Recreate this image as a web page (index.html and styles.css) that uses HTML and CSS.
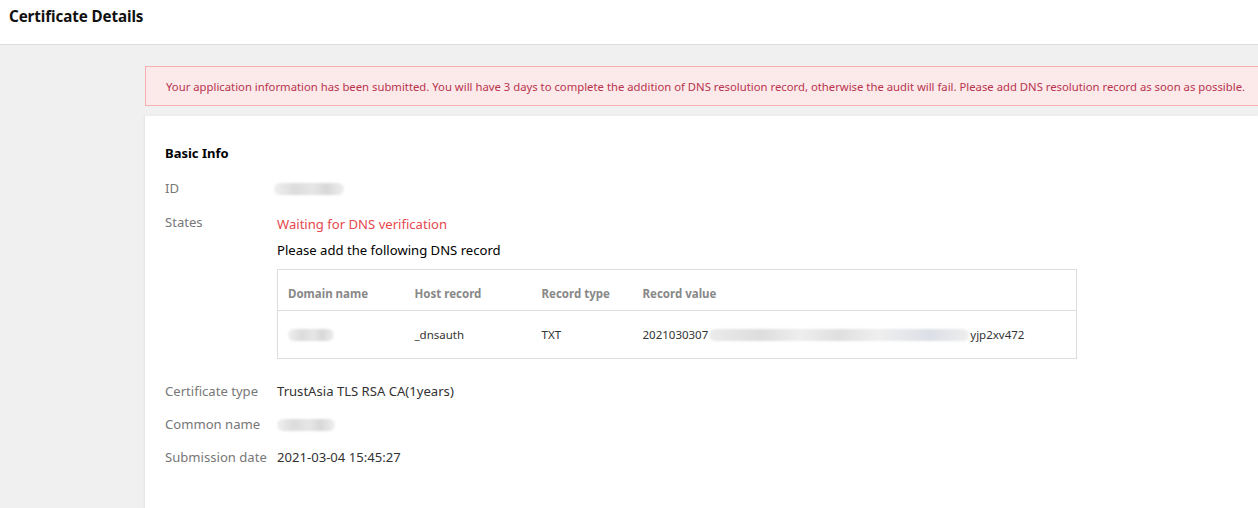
FILE: index.html
```html
<!DOCTYPE html>
<html>
<head>
<meta charset="utf-8">
<link rel="stylesheet" href="styles.css">
</head>
<body>
<header class="topbar"><h1 class="title">Certificate Details</h1></header>
<main class="content">
  <div class="alert">Your application information has been submitted. You will have 3 days to complete the addition of DNS resolution record, otherwise the audit will fail. Please add DNS resolution record as soon as possible.</div>
  <section class="card">
    <h2 class="section-title">Basic Info</h2>
    <div class="row row-id">
      <div class="label">ID</div>
      <div class="value"><span class="blur blur-id"></span></div>
    </div>
    <div class="row row-state">
      <div class="label">States</div>
      <div class="value">
        <div class="status">Waiting for DNS verification</div>
        <div class="hint">Please add the following DNS record</div>
        <table class="dns">
          <thead>
            <tr><th class="c1">Domain name</th><th class="c2">Host record</th><th class="c3">Record type</th><th>Record value</th></tr>
          </thead>
          <tbody>
            <tr><td><span class="blur blur-domain"></span></td><td>_dnsauth</td><td>TXT</td><td><span class="rv">2021030307<span class="blur blur-value"></span>yjp2xv472</span></td></tr>
          </tbody>
        </table>
      </div>
    </div>
    <div class="row row-cert">
      <div class="label">Certificate type</div>
      <div class="value">TrustAsia TLS RSA CA(1years)</div>
    </div>
    <div class="row">
      <div class="label">Common name</div>
      <div class="value"><span class="blur blur-cn"></span></div>
    </div>
    <div class="row">
      <div class="label">Submission date</div>
      <div class="value">2021-03-04 15:45:27</div>
    </div>
  </section>
</main>
</body>
</html>
```
FILE: styles.css
```css
* { box-sizing: border-box; }
html, body { margin: 0; padding: 0; }
body {
  width: 1258px;
  height: 508px;
  overflow: hidden;
  background: #f0f0f0;
  font-family: "Noto Sans", "Open Sans", sans-serif;
  color: #000;
}
.topbar {
  height: 45px;
  background: #fff;
  border-bottom: 1px solid #dcdcdc;
  padding: 0 9px;
  display: flex;
  align-items: center;
}
.title {
  margin: 0;
  margin-top: -12px;
  font-size: 15.2px;
  font-weight: 700;
  color: #111;
  letter-spacing: -0.1px;
}
.content {
  padding: 21px 0 0 145px;
  width: 1258px;
}
.alert {
  height: 40px;
  background: #fce9e9;
  border: 1px solid #f5b1b2;
  border-right: none;
  color: #b8344f;
  font-size: 11.3px;
  padding: 0 0 0 20px;
  display: flex;
  align-items: center;
  white-space: nowrap;
  overflow: hidden;
}
.card {
  margin-top: 10px;
  background: #fff;
  padding: 28px 20px 40px 20px;
  min-height: 400px;
  box-shadow: -1px 0 2px rgba(0,0,0,0.06);
}
.section-title {
  margin: 0 0 16px 0;
  font-size: 13px;
  font-weight: 700;
  color: #000;
  line-height: 18px;
}
.row {
  display: flex;
  font-size: 13.1px;
  line-height: 20px;
  margin-bottom: 13px;
}
.row-id { margin-bottom: 14px; }
.row-state { margin-bottom: 22px; }
.label {
  width: 112px;
  color: #777;
  flex: none;
}
.value { color: #333; }
.status { color: #e5484d; margin-top: 2px; }
.hint { color: #000; margin-top: 6px; }
.dns {
  margin-top: 9px;
  width: 800px;
  border: 1px solid #ddd;
  border-collapse: collapse;
  font-size: 11.5px;
}
.dns th {
  text-align: left;
  color: #888;
  font-weight: 700;
  height: 41px;
  padding: 7px 10px 0 10px;
  border-bottom: 1px solid #ddd;
}
.dns td {
  height: 48px;
  padding: 0 10px;
  color: #333;
}
.dns .c1 { width: 127px; }
.dns .c2 { width: 127px; }
.dns .c3 { width: 101px; }
.rv { display: inline-flex; align-items: center; }
.blur {
  display: inline-block;
  height: 12px;
  border-radius: 6px;
  background: linear-gradient(90deg, #efefef, #dcdcdc 30%, #e6e6e6 55%, #d8d8d8 75%, #efefef);
  filter: blur(1px);
  vertical-align: middle;
}
.blur-id { width: 70px; margin-left: -3px; }
.blur-domain { width: 46px; }
.blur-value { width: 260px; margin: 0 1px; background: linear-gradient(90deg, #ebebeb, #dddddd 20%, #eeeeee 35%, #dfdfdf 50%, #efefef 65%, #dcdfe6 85%, #eeeeee); }
.blur-cn { width: 58px; }
```
